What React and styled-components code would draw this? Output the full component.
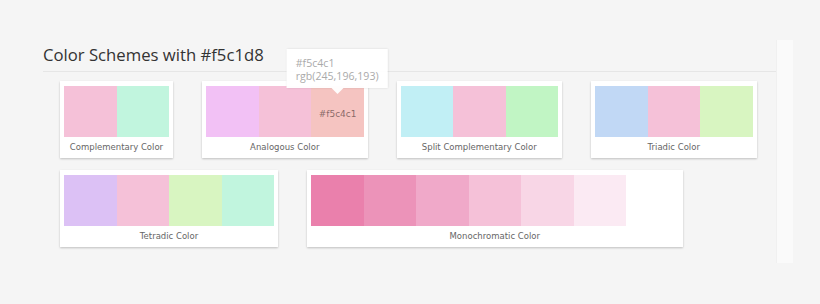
import React from 'react'
import styled, { createGlobalStyle } from 'styled-components'

const schemes = [
  { name: 'Complementary Color', colors: ['#f5c1d8', '#c1f5de'] },
  { name: 'Analogous Color', colors: ['#f2c1f5', '#f5c1d8', '#f5c4c1'], hover: 2 },
  { name: 'Split Complementary Color', colors: ['#c1eff5', '#f5c1d8', '#c1f5c4'] },
  { name: 'Triadic Color', colors: ['#c1d8f5', '#f5c1d8', '#d8f5c1'] },
  { name: 'Tetradic Color', colors: ['#dcc1f5', '#f5c1d8', '#d8f5c1', '#c1f5de'] },
  {
    name: 'Monochromatic Color',
    colors: ['#ea80ac', '#ec93b9', '#f0a9c9', '#f5c1d8', '#f8d6e6', '#fbeaf3', '#ffffff'],
  },
]

function toRgb(hex) {
  const n = parseInt(hex.slice(1), 16)
  return `rgb(${(n >> 16) & 255},${(n >> 8) & 255},${n & 255})`
}

function App() {
  return (
    <>
      <GlobalStyle />
      <Page>
        <Main>
          <Title>Color Schemes with #f5c1d8</Title>
          <Cards>
            {schemes.map((s) => (
              <Card key={s.name}>
                <Swatches>
                  {s.colors.map((c, i) => (
                    <Swatch key={i} $color={c}>
                      {s.hover === i && (
                        <>
                          <HexLabel>{c}</HexLabel>
                          <Tooltip>
                            <span>{c}</span>
                            <span>{toRgb(c)}</span>
                          </Tooltip>
                        </>
                      )}
                    </Swatch>
                  ))}
                </Swatches>
                <Caption>{s.name}</Caption>
              </Card>
            ))}
          </Cards>
        </Main>
        <Rail />
      </Page>
    </>
  )
}

export default App

const GlobalStyle = createGlobalStyle`
    body{
        margin: 0;
        background: #f5f5f5;
        font-family: "Open Sans", sans-serif;
    }
`;

const Page = styled.div`
    display: flex;
    align-items: flex-start;
    padding: 40px 0 0 43px;
    height: 304px;
    box-sizing: border-box;
`;

const Main = styled.div`
    width: 733px;
`;

const Title = styled.h2`
    margin: 0;
    font-family: "Open Sans", sans-serif;
    font-weight: 400;
    font-size: 16.7px;
    line-height: 24px;
    color: #333;
    padding: 3px 0 4px;
    border-bottom: 1px solid #e6e6e6;
`;

const Cards = styled.div`
    display: flex;
    flex-wrap: wrap;
    column-gap: 29px;
    row-gap: 12px;
    padding: 9px 0 0 17px;
`;

const Card = styled.div`
    background: #fff;
    padding: 5px 4px 0;
    box-shadow: 0 1px 2px rgba(0, 0, 0, 0.22);
`;

const Swatches = styled.div`
    display: flex;
`;

const Swatch = styled.div`
    position: relative;
    width: 52.5px;
    height: 51px;
    background: ${(p) => p.$color};
    display: flex;
    align-items: center;
    justify-content: flex-end;
`;

const HexLabel = styled.span`
    font-family: "DejaVu Sans", sans-serif;
    font-size: 9px;
    color: rgba(60, 40, 40, 0.6);
    padding-right: 7px;
    margin-top: 4px;
`;

const Tooltip = styled.div`
    position: absolute;
    left: 50%;
    bottom: 49px;
    transform: translateX(-50%);
    width: 101px;
    height: 39px;
    box-sizing: border-box;
    padding: 8px 9px 0;
    background: rgba(255, 255, 255, 0.96);
    box-shadow: 0 0 2px rgba(0, 0, 0, 0.12);
    display: flex;
    flex-direction: column;
    font-family: "Open Sans", sans-serif;
    font-size: 10.6px;
    line-height: 12.5px;
    color: #aaa;
    &:after{
        content: "";
        position: absolute;
        left: 50%;
        bottom: -6px;
        margin-left: -6px;
        border-left: 6px solid transparent;
        border-right: 6px solid transparent;
        border-top: 6px solid rgba(255, 255, 255, 0.96);
    }
`;

const Caption = styled.div`
    height: 21px;
    line-height: 21px;
    text-align: center;
    font-family: "DejaVu Sans", sans-serif;
    font-size: 8.5px;
    color: #666;
`;

const Rail = styled.div`
    width: 16px;
    height: 223px;
    background: #fafafa;
    border-left: 1px solid #f0f0f0;
`;
